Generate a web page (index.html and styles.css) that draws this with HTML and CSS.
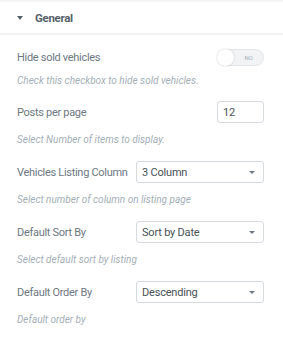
FILE: index.html
```html
<!DOCTYPE HTML>
<html>
<head>
<title>General settings</title>
<link rel="stylesheet" href="styles.css">
</head>
<body>
<div class="panel">
    <div class="section-head">
        <span class="caret"></span>
        <span class="section-title">General</span>
    </div>

    <div class="controls">
        <div class="control control-switch">
            <div class="control-row">
                <label class="control-label">Hide sold vehicles</label>
                <span class="switch">
                    <span class="switch-knob"></span>
                    <span class="switch-text">NO</span>
                </span>
            </div>
            <p class="control-desc">Check this checkbox to hide sold vehicles.</p>
        </div>

        <div class="control">
            <div class="control-row">
                <label class="control-label">Posts per page</label>
                <input class="number" type="text" value="12">
            </div>
            <p class="control-desc">Select Number of items to display.</p>
        </div>

        <div class="control">
            <div class="control-row">
                <label class="control-label">Vehicles Listing Column</label>
                <div class="select">3 Column<span class="arrow"></span></div>
            </div>
            <p class="control-desc">Select number of column on listing page</p>
        </div>

        <div class="control">
            <div class="control-row">
                <label class="control-label">Default Sort By</label>
                <div class="select">Sort by Date<span class="arrow"></span></div>
            </div>
            <p class="control-desc">Select default sort by listing</p>
        </div>

        <div class="control">
            <div class="control-row">
                <label class="control-label">Default Order By</label>
                <div class="select">Descending<span class="arrow"></span></div>
            </div>
            <p class="control-desc">Default order by</p>
        </div>
    </div>
</div>
</body>
</html>
```

FILE: styles.css
```css
html, body {
    height: 100%;
}
body {
    margin: 0;
    background: #fff;
    font-family: Roboto, "Liberation Sans", sans-serif;
    color: #6d7882;
}
.panel {
    border-top: 2px solid #f3f4f6;
}
.section-head {
    height: 31px;
    display: flex;
    align-items: center;
    padding-left: 17px;
    border-bottom: 2px solid #f1f3f5;
}
.caret {
    width: 0;
    height: 0;
    border-left: 3px solid transparent;
    border-right: 3px solid transparent;
    border-top: 4px solid #556068;
    margin-right: 12px;
}
.section-title {
    font-size: 11.5px;
    font-weight: bold;
    letter-spacing: -0.3px;
    color: #556068;
}
.controls {
    padding: 11px 19px 0 17px;
}
.control {
    margin-bottom: 15px;
}
.control-row {
    height: 22px;
    display: flex;
    align-items: center;
}
.control-label {
    flex: 1;
    min-width: 0;
    font-size: 11px;
    letter-spacing: -0.3px;
    white-space: nowrap;
    color: #6d7882;
}
.control-desc {
    margin: 10px 0 0;
    font-size: 10px;
    line-height: 13px;
    font-style: italic;
    color: #a4afb7;
}
.control-switch .control-desc {
    margin-top: 6px;
}
.control-switch {
    margin-bottom: 14px;
}
.switch {
    width: 47px;
    height: 17px;
    flex-shrink: 0;
    box-sizing: border-box;
    border: 1px solid #e3e6e9;
    border-radius: 9px;
    background: #f1f3f5;
    display: flex;
    align-items: center;
    justify-content: space-between;
}
.switch-knob {
    width: 17px;
    height: 17px;
    margin-left: -1px;
    border-radius: 50%;
    background: #fff;
    box-shadow: 0 0 2px rgba(0, 0, 0, 0.2);
}
.switch-text {
    font-size: 6px;
    color: #a4afb7;
    margin-right: 10px;
}
.number {
    width: 47px;
    height: 22px;
    flex-shrink: 0;
    box-sizing: border-box;
    border: 1px solid #d5dadf;
    border-radius: 3px;
    padding: 0 5px;
    font-family: Roboto, "Liberation Sans", sans-serif;
    font-size: 11px;
    letter-spacing: -0.2px;
    color: #495157;
    outline: none;
}
.select {
    width: 128px;
    height: 22px;
    flex-shrink: 0;
    box-sizing: border-box;
    border: 1px solid #d5dadf;
    border-radius: 3px;
    padding: 0 5px;
    display: flex;
    align-items: center;
    justify-content: space-between;
    font-size: 11px;
    letter-spacing: -0.2px;
    color: #495157;
}
.arrow {
    width: 0;
    height: 0;
    border-left: 3px solid transparent;
    border-right: 3px solid transparent;
    border-top: 3px solid #6d7882;
    margin-right: 3px;
}
```
